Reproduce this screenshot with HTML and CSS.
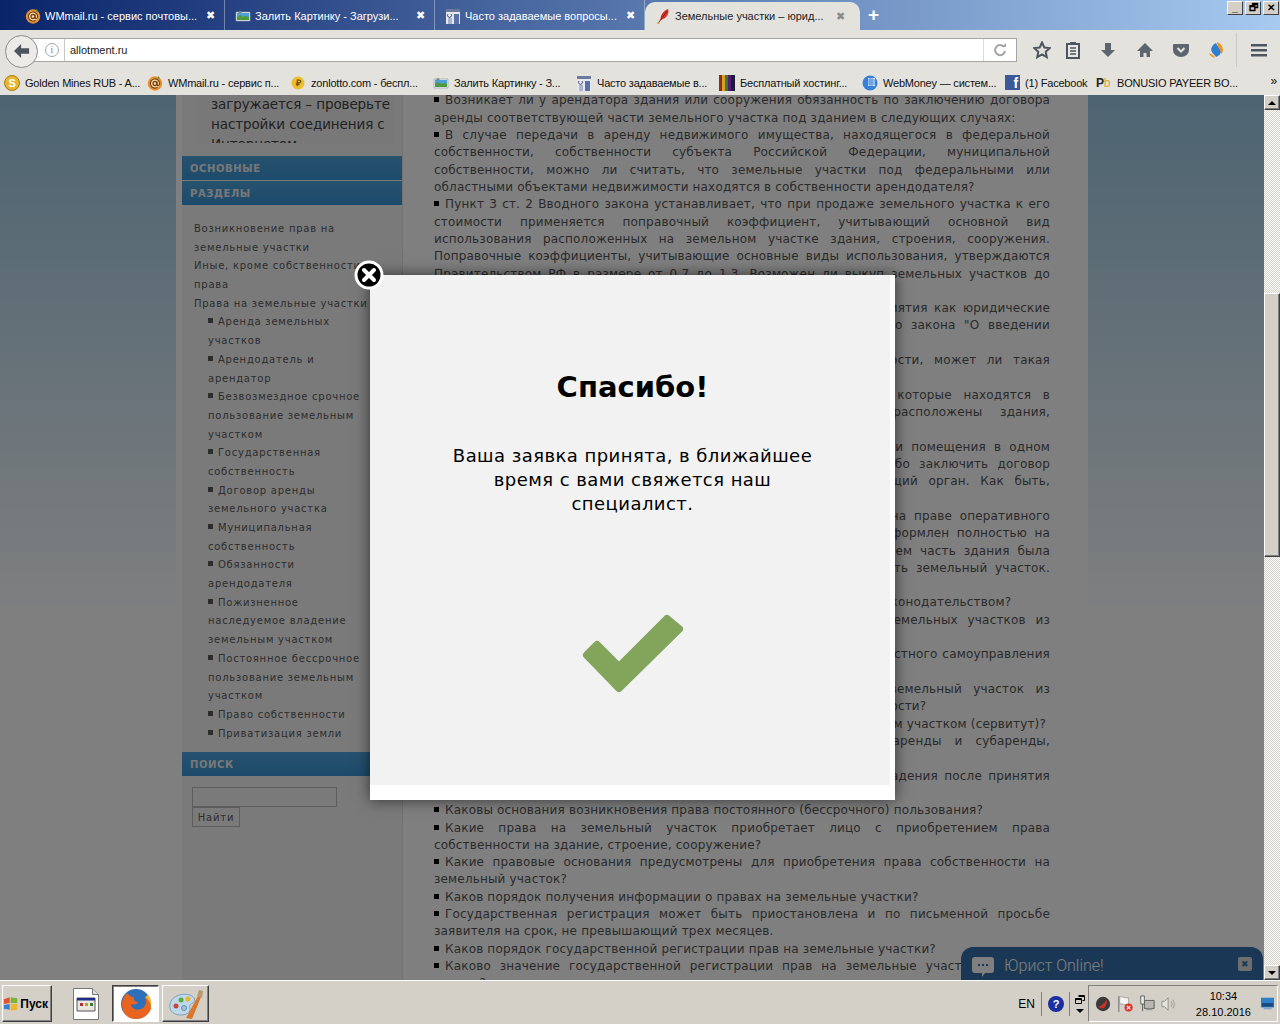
FILE: index.html
```html
<!DOCTYPE html>
<html lang="ru">
<head>
    <meta charset="UTF-8">
    <title>Земельные участки – юридическая консультация</title>
    <link rel="stylesheet" href="styles.css">
</head>
<body>
    <svg class="sprite" width="0" height="0">
        <symbol id="i-mail" viewBox="0 0 16 16">
            <circle cx="8" cy="8.5" r="7.2" fill="#e8912c"/>
            <circle cx="8" cy="8.5" r="5" fill="#fbe3b8"/>
            <circle cx="8" cy="8.5" r="2" fill="none" stroke="#7a3d08" stroke-width="1.3"/>
            <path d="M10 6.5v3c0 2 2.6 1.6 2.6-1a4.6 4.6 0 1 0-2 3.8" fill="none" stroke="#7a3d08" stroke-width="1.2"/>
            <path d="M11 1l2 2-2 1z" fill="#6b8f3a"/>
        </symbol>
        <symbol id="i-img" viewBox="0 0 16 16">
            <path d="M1 4h14v9H1z" fill="#e9eef2" stroke="#8a9aa5" stroke-width=".6"/>
            <path d="M2 5h12v4H2z" fill="#4fa0d8"/>
            <path d="M2 12V9l3-2 3 2 3-1 3 1v3z" fill="#4f9a3a"/>
            <path d="M3 5l2-2.5L7 5z" fill="#7d8a90"/>
        </symbol>
        <symbol id="i-doc" viewBox="0 0 16 16">
            <path d="M1 1h14v15H1z" fill="#e6e8ee"/>
            <path d="M1 1h14v3H1z" fill="#6c7a9c"/>
            <path d="M9 6h5v10H9z" fill="#5a6fa8"/>
            <path d="M3 6a2 2 0 1 0 3 0" fill="none" stroke="#3a4a78"/>
            <path d="M3 10h4v6H3z" fill="#a9b4cf"/>
        </symbol>
        <symbol id="i-feather" viewBox="0 0 16 16">
            <path d="M13 1c1.500 3-.5 7-3 9l-4 2-1 1 1-5c1-3 4-6 7-7z" fill="#d8322a"/>
            <path d="M12 3L4 14l-1 2" fill="none" stroke="#7d1410" stroke-width=".9"/>
            <path d="M2 14l3 1-2 1z" fill="#e8b030"/>
        </symbol>
        <symbol id="i-scoin" viewBox="0 0 16 16">
            <circle cx="8" cy="8" r="7.500" fill="#e8b52e" stroke="#a87a12"/>
            <text x="8" y="12" class="coin-text">S</text>
        </symbol>
        <symbol id="i-rcoin" viewBox="0 0 16 16">
            <circle cx="8" cy="8" r="6.500" fill="#eebd2c"/>
            <text x="8" y="11" class="coin-text small">₽</text>
        </symbol>
        <symbol id="i-bars" viewBox="0 0 16 16">
            <path d="M0 0h3v16H0z" fill="#8c2f1a"/>
            <path d="M3 0h3v16H3z" fill="#d8a020"/>
            <path d="M6 0h3v16H6z" fill="#3a7a2a"/>
            <path d="M9 0h3v16H9z" fill="#5a1a7a"/>
            <path d="M12 0h4v16h-4z" fill="#1a1a3a"/>
        </symbol>
        <symbol id="i-globe" viewBox="0 0 16 16">
            <circle cx="8" cy="8" r="7.500" fill="#3a80d8"/>
            <path d="M6 3h7v8H6z" fill="#cfe3f8"/>
            <path d="M6 5h7M6 7h7M6 9h7M8 3v8M10 3v8" stroke="#3a80d8" stroke-width=".8"/>
        </symbol>
    </svg>

    <header class="browser">
        <div class="tabstrip">
            <div class="tab">
                <svg class="fav"><use href="#i-mail"/></svg>
                <span class="tab-title">WMmail.ru - сервис почтовы...</span>
                <span class="tab-close">✖</span>
            </div>
            <div class="tab">
                <svg class="fav"><use href="#i-img"/></svg>
                <span class="tab-title">Залить Картинку - Загрузи...</span>
                <span class="tab-close">✖</span>
            </div>
            <div class="tab">
                <svg class="fav"><use href="#i-doc"/></svg>
                <span class="tab-title">Часто задаваемые вопросы...</span>
                <span class="tab-close">✖</span>
            </div>
            <div class="tab tab-active">
                <svg class="fav"><use href="#i-feather"/></svg>
                <span class="tab-title">Земельные участки – юрид...</span>
                <span class="tab-close">✖</span>
            </div>
            <span class="tab-new">+</span>
            <div class="win-buttons">
                <span class="win-btn">_</span>
                <span class="win-btn">🗗</span>
                <span class="win-btn">✕</span>
            </div>
        </div>

        <div class="navbar">
            <span class="back-btn">
                <svg width="18" height="16" viewBox="0 0 20 18"><path d="M9 1L1 9l8 8V12h9V6H9z" fill="#4d5660"/></svg>
            </span>
            <div class="urlbar">
                <span class="url-info">i</span>
                <span class="url-text">allotment.ru</span>
                <span class="url-reload">
                    <svg width="14" height="14" viewBox="0 0 14 14"><path d="M11 4a5 5 0 1 0 1 4" fill="none" stroke="#a5a5a5" stroke-width="2"/><path d="M9 4h4V0z" fill="#a5a5a5"/></svg>
                </span>
            </div>
            <div class="tools">
                <svg class="tool tool-star" viewBox="0 0 18 18"><path d="M9 1.500l2.300 5 5.400.6-4 3.700 1.100 5.400L9 13.500 4.200 16.200l1.100-5.400-4-3.700 5.400-.6z" fill="none" stroke="#4d5660" stroke-width="2"/></svg>
                <svg class="tool tool-clip" viewBox="0 0 18 18"><path d="M3 3h12v14H3z" fill="#e9e7e2" stroke="#4d5660" stroke-width="2"/><path d="M6 1h6v3H6z" fill="#4d5660"/><path d="M6 7h6M6 10h6M6 13h6" stroke="#4d5660" stroke-width="1.500"/></svg>
                <svg class="tool tool-down" viewBox="0 0 18 18"><path d="M6 2h6v7h4l-7 7-7-7h4z" fill="#5c6670"/></svg>
                <svg class="tool tool-home" viewBox="0 0 18 18"><path d="M9 2L1 10h3v6h3.500v-4h3v4H14v-6h3z" fill="#5c6670"/></svg>
                <svg class="tool tool-pocket" viewBox="0 0 18 18"><path d="M2 3h14a1 1 0 0 1 1 1v5a8 7 0 0 1-16 0V4a1 1 0 0 1 1-1z" fill="#5c6670"/><path d="M5.500 7L9 10.500 12.500 7" fill="none" stroke="#e4e2dd" stroke-width="2"/></svg>
                <svg class="tool tool-app" viewBox="0 0 18 18"><path d="M9 2C5 4 3 8 5 11c1 2 3 3 4 5 3-1 5-3 5-6-1-3-4-5-5-8z" fill="#2f7fd0"/><path d="M10 1c3 1 6 4 6 8 0 2-1 3-2 4 0-5-4-7-4-12z" fill="#f0961e"/><path d="M8 17c-3-1-5-2-6-5 2 1 5 2 6 5z" fill="#f0961e"/></svg>
                <span class="tool-sep"></span>
                <svg class="tool tool-menu" viewBox="0 0 18 18"><path d="M1 3h16v2.500H1zM1 8h16v2.500H1zM1 13h16v2.500H1z" fill="#4d5660"/></svg>
            </div>
        </div>

        <div class="bookmarks">
            <div class="bm"><svg class="fav"><use href="#i-scoin"/></svg><span>Golden Mines RUB - A...</span></div>
            <div class="bm"><svg class="fav"><use href="#i-mail"/></svg><span>WMmail.ru - сервис п...</span></div>
            <div class="bm"><svg class="fav"><use href="#i-rcoin"/></svg><span>zonlotto.com - беспл...</span></div>
            <div class="bm"><svg class="fav"><use href="#i-img"/></svg><span>Залить Картинку - З...</span></div>
            <div class="bm"><svg class="fav"><use href="#i-doc"/></svg><span>Часто задаваемые в...</span></div>
            <div class="bm"><svg class="fav"><use href="#i-bars"/></svg><span>Бесплатный хостинг...</span></div>
            <div class="bm"><svg class="fav"><use href="#i-globe"/></svg><span>WebMoney — систем...</span></div>
            <div class="bm bm-short"><span class="fb-icon">f</span><span>(1) Facebook</span></div>
            <div class="bm"><span class="pb-icon">P<b>b</b></span><span>BONUSIO PAYEER BO...</span></div>
            <span class="bm-more">»</span>
        </div>
    </header>

    <main class="viewport">
        <div class="page-view">
            <div class="page">
                <aside class="sidebar">
                    <div class="side-note">
                        <p>загружается – проверьте настройки соединения с Интернетом</p>
                    </div>
                    <h3 class="side-head">Основные</h3>
                    <h3 class="side-head">Разделы</h3>
                    <ul class="side-menu">
                        <li>Возникновение прав на земельные участки</li>
                        <li>Иные, кроме собственности, права</li>
                        <li>Права на земельные участки
                            <ul class="side-sub">
                                <li>Аренда земельных участков</li>
                                <li>Арендодатель и арендатор</li>
                                <li>Безвозмездное срочное пользование земельным участком</li>
                                <li>Государственная собственность</li>
                                <li>Договор аренды земельного участка</li>
                                <li>Муниципальная собственность</li>
                                <li>Обязанности арендодателя</li>
                                <li>Пожизненное наследуемое владение земельным участком</li>
                                <li>Постоянное бессрочное пользование земельным участком</li>
                                <li>Право собственности</li>
                                <li>Приватизация земли</li>
                            </ul>
                        </li>
                    </ul>
                    <h3 class="side-head side-head-search">Поиск</h3>
                    <form class="side-search">
                        <input type="text" class="search-input">
                        <button type="button" class="search-btn">Найти</button>
                    </form>
                </aside>

                <article class="content">
                    <p class="j b">Возникает ли у арендатора здания или сооружения обязанность по заключению договора</p>
                    <p>аренды соответствующей части земельного участка под зданием в следующих случаях:</p>
                    <p class="j b">В случае передачи в аренду недвижимого имущества, находящегося в федеральной</p>
                    <p class="j">собственности, собственности субъекта Российской Федерации, муниципальной</p>
                    <p class="j">собственности, можно ли считать, что земельные участки под федеральными или</p>
                    <p>областными объектами недвижимости находятся в собственности арендодателя?</p>
                    <p class="j b">Пункт 3 ст. 2 Вводного закона устанавливает, что при продаже земельного участка к его</p>
                    <p class="j">стоимости применяется поправочный коэффициент, учитывающий основной вид</p>
                    <p class="j">использования расположенных на земельном участке здания, строения, сооружения.</p>
                    <p class="j">Поправочные коэффициенты, учитывающие основные виды использования, утверждаются</p>
                    <p class="j">Правительством РФ в размере от 0,7 до 1,3. Возможен ли выкуп земельных участков до</p>
                    <p>утверждения этих коэффициентов?</p>
                    <p class="j b">Могут ли приобрести в аренду земельные участки такие предприятия как юридические</p>
                    <p class="j">лица, которые были созданы до вступления в силу Федерального закона "О введении</p>
                    <p>в действие Земельного кодекса"?</p>
                    <p class="j b">Если земельный участок находится в федеральной собственности, может ли такая</p>
                    <p>организация его выкупить?</p>
                    <p class="j b">Как определяются границы и размеры земельных участков, которые находятся в</p>
                    <p class="j">государственной собственности, если на таких участках расположены здания,</p>
                    <p>строения и сооружения?</p>
                    <p class="j b">Если у нескольких лиц одновременно находятся в собственности помещения в одном</p>
                    <p class="j">здании, должны ли они приобрести участок в собственность либо заключить договор</p>
                    <p class="j">аренды с множественностью лиц, обратившись в соответствующий орган. Как быть,</p>
                    <p>если один из собственников не согласен на участие в аренде?</p>
                    <p class="j b">Здание находится у областного государственного предприятия на праве оперативного</p>
                    <p class="j">управления, а земельный участок под этим зданием был тогда оформлен полностью на</p>
                    <p class="j">это предприятие. Можно ли теперь приобрести участок, если затем часть здания была</p>
                    <p class="j">приватизирована? Как в таком случае покупателю можно оформить земельный участок.</p>
                    <p>Кто является продавцом?</p>
                    <p class="b">Какие участки не могут быть выкуплены в соответствии с новым законодательством?</p>
                    <p class="j b">Какие документы нужны для приобретения в собственность земельных участков из</p>
                    <p>государственной собственности?</p>
                    <p class="j b">Какие полномочия в этой сфере имеют органы власти и органы местного самоуправления</p>
                    <p>при распоряжении земельными участками?</p>
                    <p class="j b">Может ли собственник здания или сооружения приобрести земельный участок из</p>
                    <p>земель, находящихся в федеральной либо муниципальной собственности?</p>
                    <p class="b">Как приобрести право ограниченного пользования чужим земельным участком (сервитут)?</p>
                    <p class="j b">Каковы особенности заключения и расторжения договоров аренды и субаренды,</p>
                    <p>а также передачи прав и обязанностей?</p>
                    <p class="j b">Сохраняется ли у граждан право пожизненного наследуемого владения после принятия</p>
                    <p>нового Земельного кодекса?</p>
                    <p class="b">Каковы основания возникновения права постоянного (бессрочного) пользования?</p>
                    <p class="j b">Какие права на земельный участок приобретает лицо с приобретением права</p>
                    <p>собственности на здание, строение, сооружение?</p>
                    <p class="j b">Какие правовые основания предусмотрены для приобретения права собственности на</p>
                    <p>земельный участок?</p>
                    <p class="b">Каков порядок получения информации о правах на земельные участки?</p>
                    <p class="j b">Государственная регистрация может быть приостановлена и по письменной просьбе</p>
                    <p>заявителя на срок, не превышающий трех месяцев.</p>
                    <p class="b">Каков порядок государственной регистрации прав на земельные участки?</p>
                    <p class="j b">Каково значение государственной регистрации прав на земельные участки для лица</p>
                    <p>сделок?</p>
                </article>
            </div>

            <div class="chat">
                <svg class="chat-icon" viewBox="0 0 22 22"><path d="M3 1h16a3 3 0 0 1 3 3v10a3 3 0 0 1-3 3h-6l-3 4v-4H3a3 3 0 0 1-3-3V4a3 3 0 0 1 3-3z" fill="#8a8f94"/><circle cx="7" cy="9" r="1.300" fill="#1b3855"/><circle cx="11" cy="9" r="1.300" fill="#1b3855"/><circle cx="15" cy="9" r="1.300" fill="#1b3855"/></svg>
                <span class="chat-title">Юрист Online!</span>
                <span class="chat-close">✖</span>
            </div>

            <div class="overlay"></div>

            <section class="modal">
                <span class="modal-close">
                    <svg width="30" height="30" viewBox="0 0 30 30"><circle cx="15" cy="15" r="13" fill="#000" stroke="#fff" stroke-width="3"/><path d="M10 10l10 10M20 10L10 20" stroke="#fff" stroke-width="4" stroke-linecap="round"/></svg>
                </span>
                <div class="modal-inner">
                    <h2 class="modal-title">Спасибо!</h2>
                    <p class="modal-text">Ваша заявка принята, в ближайшее время с вами свяжется наш специалист.</p>
                    <svg class="modal-check" width="105" height="81" viewBox="0 0 105 81"><path d="M87 6l12 10-60 59-32-33 10-10 22 22z" fill="#82a55b" stroke="#82a55b" stroke-width="8" stroke-linejoin="round"/></svg>
                </div>
            </section>
        </div>

        <div class="scrollbar">
            <span class="sb-btn sb-up"></span>
            <span class="sb-track sb-track-top"></span>
            <span class="sb-thumb"></span>
            <span class="sb-track"></span>
            <span class="sb-btn sb-down"></span>
        </div>
    </main>

    <footer class="taskbar">
        <button class="task-btn start-btn">
            <svg width="16" height="16" viewBox="0 0 16 16"><path d="M1 3l6-2v6l-6 1z" fill="#e0532a"/><path d="M8 1l7 1v5l-7 0z" fill="#7cb23a"/><path d="M1 9l6-1v6l-6-1z" fill="#3a7fd0"/><path d="M8 8h7v6l-7 1z" fill="#f0b52a"/></svg>
            Пуск
        </button>
        <span class="task-file">
            <svg width="26" height="32" viewBox="0 0 26 32"><path d="M.5.500h19l6 6v25H.500z" fill="#fff" stroke="#777"/><path d="M19.500.500v6h6" fill="#ddd" stroke="#777"/><path d="M4 10h18v13H4z" fill="#e8e6e0" stroke="#555"/><path d="M4 10h18v2.500H4z" fill="#1c2f8c"/><path d="M7 15h3v3H7z" fill="#b03030"/><path d="M12 15h3v3h-3z" fill="#c89a20"/><path d="M17 15h3v3h-3z" fill="#308030"/></svg>
        </span>
        <button class="task-btn task-app task-pressed">
            <svg width="32" height="32" viewBox="0 0 32 32"><circle cx="16" cy="16" r="15" fill="#2d6fb8"/><path d="M3 11c-3 7 0 20 13 20 8 0 13-5 15-10 0-5-2-9-6-12 2 4 1 10-4 12-5 2-10-1-10-5 3 1 6 1 7-2-3 0-5-2-4-5-3 0-6-2-6-4-2 1-4 3-5 6z" fill="#e8641f"/><path d="M25 9c4 3 6 7 6 12 1-5 0-11-3-14z" fill="#f5b52a"/></svg>
        </button>
        <button class="task-btn task-app">
            <svg width="36" height="32" viewBox="0 0 36 32"><path d="M2 20C0 10 12 4 22 7c5 2 6 6 3 8-3 1-4 3-3 5 1 4-3 7-9 7-5 0-10-2-11-7z" fill="#bcd8ea" stroke="#7fa0b8"/><circle cx="8" cy="18" r="2.500" fill="#c8453a"/><circle cx="13" cy="12" r="2.500" fill="#5aa83e"/><circle cx="20" cy="11" r="2.500" fill="#e8b52e"/><circle cx="16" cy="20" r="2.500" fill="#9fc3dc" stroke="#6a90aa"/><path d="M18 30L30 8l3 1-9 22z" fill="#d9782c"/><path d="M29 8l2-6 4 1-1 7z" fill="#b89a70"/></svg>
        </button>

        <div class="tray-left">
            <span class="tray-lang">EN</span>
            <span class="tray-help">?</span>
            <span class="tray-windows">
                <svg width="10" height="9" viewBox="0 0 10 9"><path d="M3.500.500h6v5h-2M.500 3.500h6v5h-6z" fill="none" stroke="#000"/><path d="M3.500 1h6v1h-6zM.500 4h6v1h-6z"/></svg>
                <i></i>
            </span>
        </div>
        <div class="tray">
            <svg width="18" height="18" viewBox="0 0 18 18"><circle cx="9" cy="9" r="8" fill="#3a3a3a"/><path d="M4 12c3-1 7-4 9-8 1 3 0 8-4 10-2 0-4-1-5-2z" fill="#c8302a"/></svg>
            <svg width="18" height="18" viewBox="0 0 18 18"><path d="M2 0v18" stroke="#888" stroke-width="1.500"/><path d="M3 1c4-1 5 2 10 1v8c-5 1-6-2-10-1z" fill="#f4f4f0" stroke="#888" stroke-width=".7"/><circle cx="13" cy="13" r="4.500" fill="#d8322a"/><path d="M11 11l4 4m0-4l-4 4" stroke="#fff" stroke-width="1.200"/></svg>
            <svg width="18" height="18" viewBox="0 0 18 18"><path d="M6 5h11v9H6z" fill="#b8b8b0" stroke="#555"/><path d="M8 14h7v2H8z" fill="#999"/><path d="M2 0v9h4V0z" fill="#f0f0e8" stroke="#555"/><path d="M4 9v8" stroke="#555"/></svg>
            <svg width="18" height="18" viewBox="0 0 18 18"><path d="M1 6h3l4-4v14l-4-4H1z" fill="#e4e2dc" stroke="#8a8a84"/><path d="M11 6a4 4 0 0 1 0 6M13 4a7 7 0 0 1 0 10" fill="none" stroke="#a0a09a" stroke-width="1.200"/></svg>
            <span class="clock">10:34<br>28.10.2016</span>
            <svg width="15" height="13" viewBox="0 0 15 13"><path d="M0 0h15v11H0z" fill="#2f80c8"/><path d="M1 6h13v4H1z" fill="#174a80"/><path d="M3 11h9v2H3z" fill="#7fa8c8"/></svg>
        </div>
    </footer>
</body>
</html>
```

FILE: styles.css
```css
* {
    box-sizing: border-box;
}
html, body {
    margin: 0;
    height: 100%;
}
body {
    width: 1280px;
    height: 1024px;
    display: flex;
    flex-direction: column;
    overflow: hidden;
    font-family: "Liberation Sans", sans-serif;
    background: #d4d0c8;
}
h2, h3, p, ul {
    margin: 0;
    padding: 0;
}
ul {
    list-style: none;
}
.sprite {
    position: absolute;
}
.coin-text {
    font: bold 11px "Liberation Sans", sans-serif;
    text-anchor: middle;
    fill: #fff;
}
.coin-text.small {
    font-size: 9px;
    fill: #6b4a00;
}
.fav {
    width: 16px;
    height: 16px;
    flex: none;
}

/* browser window */
.browser {
    flex: none;
    height: 95px;
    background: #e4e2dd;
}
.tabstrip {
    height: 30px;
    display: flex;
    padding-left: 15px;
    background: linear-gradient(90deg, #0a246a, #a6caf0);
    position: relative;
}
.tab {
    width: 210px;
    height: 30px;
    padding: 1px 0 0 10px;
    display: flex;
    align-items: center;
    gap: 4px;
    color: #fff;
    font-size: 11px;
    border-right: 1px solid rgba(255, 255, 255, .35);
}
.tab-title {
    width: 155px;
    white-space: nowrap;
    overflow: hidden;
}
.tab-close {
    width: 12px;
    font-size: 11px;
    text-align: center;
    color: #fff;
}
.tab-active {
    width: 215px;
    height: 28px;
    margin-top: 2px;
    padding-top: 0;
    background: #e4e2dd;
    color: #222;
    border: 0;
    border-radius: 10px 10px 0 0;
}
.tab-active .tab-close {
    color: #8a8a88;
}
.tab-new {
    margin-left: 8px;
    color: #fff;
    font: bold 19px/30px "Liberation Sans", sans-serif;
}
.win-buttons {
    margin-left: auto;
    display: flex;
    align-items: flex-start;
    gap: 2px;
    padding: 1px 1px 0 0;
}
.win-btn {
    width: 16px;
    height: 14px;
    background: #d4d0c8;
    border: 1px solid;
    border-color: #fff #404040 #404040 #fff;
    font: bold 10px/11px "Liberation Sans", sans-serif;
    text-align: center;
    color: #000;
}
.navbar {
    height: 38px;
    display: flex;
    align-items: center;
    position: relative;
    padding: 2px 0 0 5px;
}
.back-btn {
    width: 33px;
    height: 33px;
    flex: none;
    margin-top: 2px;
    display: flex;
    align-items: center;
    justify-content: center;
    border-radius: 50%;
    border: 1px solid #8c8c8c;
    background: #ecebe7;
    position: relative;
    z-index: 1;
}
.urlbar {
    width: 996px;
    height: 24px;
    margin-left: -17px;
    padding-left: 22px;
    display: flex;
    align-items: center;
    background: #fff;
    border: 1px solid #a5a5a5;
    font-size: 11px;
}
.url-info {
    width: 14px;
    height: 14px;
    margin-left: 1px;
    border: 1px solid #a5a5a5;
    border-radius: 50%;
    color: #888;
    font: 10px/12px "Liberation Serif", serif;
    text-align: center;
}
.url-text {
    margin-left: 5px;
    padding-left: 5px;
    border-left: 1px solid #c8c8c8;
    line-height: 22px;
    color: #222;
    flex: 1;
}
.url-reload {
    width: 33px;
    height: 22px;
    display: flex;
    align-items: center;
    justify-content: center;
    border-left: 1px solid #dcdcdc;
}
.tools {
    flex: 1;
    display: flex;
    align-items: center;
    position: relative;
    height: 30px;
}
.tool {
    width: 18px;
    height: 18px;
    position: absolute;
    top: 6px;
}
.tool-star { left: 16px; }
.tool-clip { left: 47px; }
.tool-down { left: 82px; }
.tool-home { left: 119px; }
.tool-pocket { left: 155px; }
.tool-app { left: 190px; }
.tool-menu { left: 233px; }
.tool-sep {
    position: absolute;
    left: 219px;
    top: -2px;
    height: 34px;
    border-left: 1px solid #cbc9c4;
}
.bookmarks {
    height: 27px;
    display: flex;
    align-items: center;
    padding: 2px 0 0 4px;
    font-size: 11px;
    letter-spacing: -.2px;
    color: #111;
    position: relative;
}
.bm {
    width: 143px;
    flex: none;
    display: flex;
    align-items: center;
    gap: 5px;
    white-space: nowrap;
}
.bm-short {
    width: 91px;
}
.fb-icon {
    width: 15px;
    height: 15px;
    flex: none;
    background: #3b5998;
    color: #fff;
    font: bold 14px/17px "Liberation Sans", sans-serif;
    text-align: right;
    padding-right: 2px;
}
.pb-icon {
    width: 16px;
    flex: none;
    font: bold 12px "Liberation Sans", sans-serif;
    color: #222;
}
.pb-icon b {
    color: #d8a838;
    font-weight: normal;
}
.bm-more {
    position: absolute;
    right: 3px;
    top: 6px;
    font-size: 12px;
}

/* page under the popup */
.viewport {
    flex: none;
    height: 885px;
    display: flex;
}
.page-view {
    width: 1264px;
    position: relative;
    overflow: hidden;
    background: linear-gradient(#9ac8e4 0, #fff 525px);
}
.page {
    width: 912px;
    height: 100%;
    margin-left: 176px;
    padding-left: 6px;
    display: flex;
    background: #fff;
}
.sidebar {
    width: 221px;
    flex: none;
    background: #f5f5f5;
    border-right: 1px solid #e4e4e4;
    font: 10px/18.68px "DejaVu Sans", sans-serif;
    letter-spacing: .75px;
    color: #5a5a5a;
}
.side-note {
    height: 48px;
    margin: 0 8px 13px 15px;
    padding: 0 0 0 14px;
    overflow: hidden;
    background: #f0f0f0;
    font: 13.5px/20px "DejaVu Sans", sans-serif;
    letter-spacing: -.1px;
    color: #444;
}
.side-note p {
    margin-top: -1px;
    width: 183px;
}
.side-head {
    height: 24px;
    margin-bottom: 1px;
    padding-left: 8px;
    background: linear-gradient(#50a4dc, #3a96d6);
    color: #f0f0f0;
    font: bold 10px/25px "DejaVu Sans", sans-serif;
    letter-spacing: .6px;
    text-transform: uppercase;
}
.side-menu {
    padding: 14px 26px 0 12px;
}
.side-sub {
    padding-left: 14px;
}
.side-sub li::before {
    content: "";
    display: inline-block;
    width: 5px;
    height: 5px;
    margin: 0 5px 2px 0;
    background: #5a5a5a;
}
.side-head-search {
    margin-top: 9px;
}
.side-search {
    padding: 10px 0 0 10px;
    display: flex;
    flex-direction: column;
    align-items: flex-start;
}
.search-input {
    width: 145px;
    height: 20px;
    border: 1px solid #bbb;
    background: #f5f5f5;
}
.search-btn {
    width: 48px;
    height: 20px;
    padding: 0;
    border: 1px solid #bbb;
    background: #f5f5f5;
    color: #5a5a5a;
    font: 10px "DejaVu Sans", sans-serif;
    letter-spacing: .8px;
}
.content {
    width: 616px;
    margin-left: 31px;
    margin-top: -2.6px;
    font: 12px/17.32px "DejaVu Sans", sans-serif;
    letter-spacing: .17px;
    color: #555;
    white-space: nowrap;
}
.content .j {
    text-align: justify;
    text-align-last: justify;
}
.content .b::before {
    content: "";
    display: inline-block;
    width: 5px;
    height: 5px;
    margin: 0 6px 2px 0;
    background: #000;
}
.chat {
    position: absolute;
    left: 961px;
    bottom: 0;
    width: 302px;
    height: 33px;
    padding: 5px 11px;
    display: flex;
    align-items: center;
    background: #3570aa;
    border-radius: 12px 12px 0 0;
    color: #fff;
}
.chat-icon {
    width: 22px;
    height: 22px;
    margin-top: 6px;
    flex: none;
    filter: brightness(2);
}
.chat-title {
    margin: 3px 0 0 10px;
    flex: 1;
    font: 300 16px Roboto, sans-serif;
}
.chat-close {
    width: 14px;
    height: 14px;
    background: #ddd;
    border-radius: 2px;
    color: #3570aa;
    font-size: 9px;
    line-height: 14px;
    text-align: center;
}
.overlay {
    position: absolute;
    inset: 0;
    background: rgba(0, 0, 0, .5);
}

/* popup */
.modal {
    position: absolute;
    left: 370px;
    top: 180px;
    width: 525px;
    height: 525px;
    padding: 0 5px 15px 0;
    background: #fff;
    box-shadow: 0 0 14px rgba(0, 0, 0, .6);
}
.modal-close {
    position: absolute;
    left: -16px;
    top: -15px;
    width: 30px;
    height: 30px;
}
.modal-inner {
    height: 100%;
    display: flex;
    flex-direction: column;
    align-items: center;
    padding: 92px 0 0 5px;
    background: #f2f2f2;
    color: #000;
    font-family: "DejaVu Sans", sans-serif;
}
.modal-title {
    font-size: 29px;
    line-height: 40px;
}
.modal-text {
    width: 375px;
    margin-top: 37px;
    font-size: 18px;
    line-height: 24px;
    letter-spacing: .45px;
    text-align: center;
}
.modal-check {
    margin-top: 97px;
}

/* classic windows scrollbar */
.scrollbar {
    width: 16px;
    display: flex;
    flex-direction: column;
}
.sb-btn, .sb-thumb {
    background: #d4d0c8;
    border: 1px solid;
    border-color: #fff #404040 #404040 #fff;
    box-shadow: inset -1px -1px #808080;
}
.sb-btn {
    height: 15px;
    flex: none;
    position: relative;
}
.sb-btn::after {
    content: "";
    position: absolute;
    left: 3px;
    border: 4px solid transparent;
}
.sb-up::after {
    top: 1px;
    border-bottom-color: #000;
}
.sb-down::after {
    top: 5px;
    border-top-color: #000;
}
.sb-track {
    flex: 1;
    background: repeating-conic-gradient(#d4d0c8 0 25%, #fff 0 50%) 0 0 / 2px 2px;
}
.sb-track-top {
    flex: none;
    height: 183px;
}
.sb-thumb {
    height: 264px;
    flex: none;
}

/* taskbar */
.taskbar {
    flex: none;
    height: 44px;
    display: flex;
    align-items: center;
    padding: 2px 2px 0 2px;
    background: #d4d0c8;
    border-top: 1px solid #fff;
}
.task-btn {
    height: 37px;
    padding: 0;
    display: flex;
    align-items: center;
    justify-content: center;
    background: #d4d0c8;
    border: 1px solid;
    border-color: #fff #404040 #404040 #fff;
    box-shadow: inset -1px -1px #808080;
}
.start-btn {
    width: 50px;
    padding-right: 3px;
    gap: 2px;
    font: bold 12px "Liberation Sans", sans-serif;
    color: #000;
}
.task-file {
    margin: 0 13px 0 21px;
    display: flex;
}
.task-app {
    width: 47px;
    margin-right: 3px;
}
.task-pressed {
    background: #fff;
    border-color: #404040 #fff #fff #404040;
    box-shadow: inset 1px 1px #808080;
}
.tray-left {
    margin-left: auto;
    height: 37px;
    display: flex;
    align-items: center;
    font-size: 12px;
}
.tray-lang {
    padding-right: 6px;
    height: 24px;
    line-height: 24px;
    border-right: 1px solid #808080;
}
.tray-help {
    width: 16px;
    height: 16px;
    margin: 0 5px 0 6px;
    border-radius: 50%;
    background: #1a2fa0;
    color: #fff;
    font: bold 11px/16px "Liberation Sans", sans-serif;
    text-align: center;
}
.tray-windows {
    width: 19px;
    height: 24px;
    padding-left: 5px;
    border-left: 1px solid #808080;
    display: flex;
    flex-direction: column;
    align-items: flex-start;
    gap: 5px;
    padding-top: 3px;
}
.tray-windows i {
    margin-left: 1px;
    border: 4px solid transparent;
    border-top-color: #000;
    border-bottom: 0;
}
.tray {
    width: 190px;
    height: 37px;
    display: flex;
    align-items: center;
    gap: 6px;
    padding: 0 3px 0 6px;
    border: 1px solid;
    border-color: #808080 #fff #fff #808080;
}
.clock {
    width: 70px;
    text-align: center;
    font: 11px/16px "Liberation Sans", sans-serif;
    color: #000;
    margin-left: 9px;
}
```
